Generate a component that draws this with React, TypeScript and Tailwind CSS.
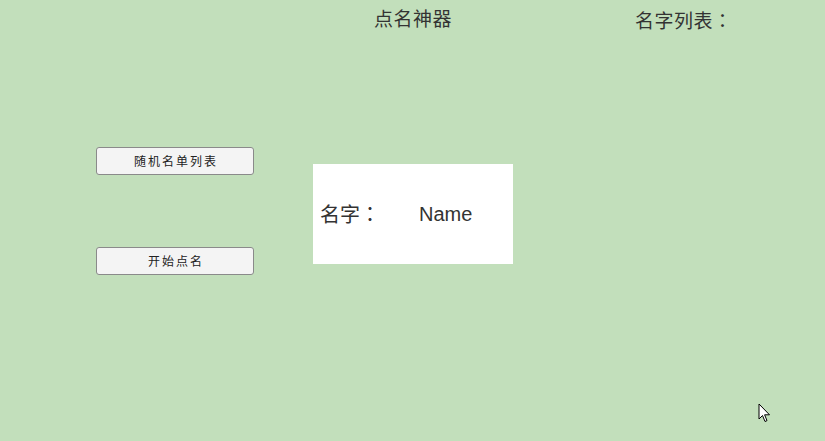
import React from 'react';

const font = { fontFamily: '"Noto Sans CJK SC", "Liberation Sans", sans-serif' };
const colonFont = { fontFamily: '"Noto Sans CJK TC", "Noto Sans CJK SC", sans-serif' };

const App: React.FC = () => {
  return (
    <div className="relative w-[825px] h-[441px] overflow-hidden bg-[#c2dfbb] text-[#333]" style={font}>
      {/* Header */}
      <div className="flex items-start h-[40px]">
        <h1 className="ml-[374px] mt-[5px] text-[19px] leading-[26px] tracking-[0.5px] font-normal">点名神器</h1>
        <div className="ml-[183px] mt-[7px] text-[19px] leading-[26px] tracking-[0.5px]">
          名字列表<span style={colonFont}>：</span>
        </div>
      </div>

      {/* Body */}
      <div className="flex items-start mt-[107px]">
        <div className="ml-[96px] flex flex-col gap-[72px]">
          <button className="w-[158px] h-[28px] pl-[2px] rounded-[3px] border border-[#8a8a8a] bg-[#f4f4f4] text-[12px] tracking-[2px] text-[#222]">
            随机名单列表
          </button>
          <button className="w-[158px] h-[28px] pl-[2px] rounded-[3px] border border-[#8a8a8a] bg-[#f4f4f4] text-[12px] tracking-[2px] text-[#222]">
            开始点名
          </button>
        </div>

        <div className="ml-[59px] mt-[17px] w-[200px] h-[100px] bg-white flex items-center">
          <span className="ml-[7px] text-[20px]">
            名字<span style={colonFont}>：</span>
          </span>
          <span className="ml-[39px] text-[20px]" style={{ fontFamily: '"Liberation Sans", sans-serif' }}>Name</span>
        </div>
      </div>

      {/* Mouse cursor */}
      <svg className="absolute left-[758px] top-[403px]" width="13" height="20" viewBox="0 0 13 20">
        <path d="M1 1 L1 16 L4.5 12.5 L7 18.5 L9 17.6 L6.6 11.8 L11.5 11.8 Z" fill="#fff" stroke="#000" strokeWidth="1" />
      </svg>
    </div>
  );
};

export default App;
